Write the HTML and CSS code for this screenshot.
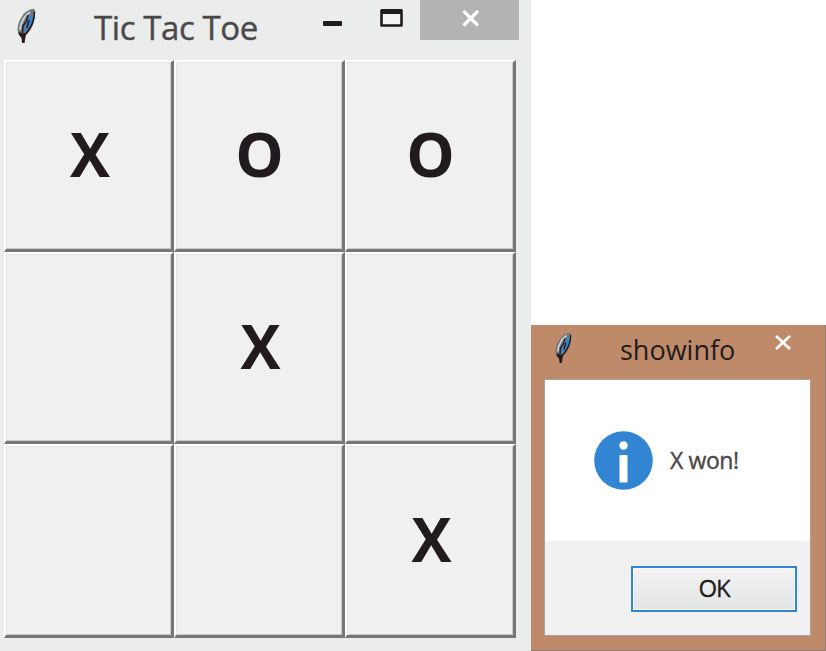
FILE: index.html
```html
<!DOCTYPE html>
<html lang="en">
<head>
<meta charset="utf-8">
<title>Tic Tac Toe</title>
<link rel="stylesheet" href="styles.css">
</head>
<body>
<svg class="defs" width="0" height="0" aria-hidden="true">
  <symbol id="feather" viewBox="0 0 20 36">
    <path d="M16.500 1.500C11 2 6.500 6 3.500 12C1 17 0.500 21 2 25.500L6 28L10 25.500C14 21 17.500 14 17.500 4Z" fill="#777779" stroke="#777779" stroke-width="1.400"/>
    <path d="M13 4C8 7 3.500 14 3 22" fill="none" stroke="#c8d0d3" stroke-width="2"/>
    <path d="M15 6L11 10C10 15 7 18 6.500 24C11 22 15 16 16.500 8Z" fill="#3185d2"/>
    <path d="M11 7L9.500 13L6 18L5.500 25M17.500 3.500C17.500 12 14 20 9 25.500M12 12L10 20" fill="none" stroke="#211b1f" stroke-width="1.500"/>
    <path d="M1.500 24L6 25.500L9.500 24.500L8.500 29L7.500 35H5L4.500 30L2 27Z" fill="#211b1f"/>
  </symbol>
</svg>
<main class="desktop">
  <section class="game">
    <header class="game-bar">
      <svg class="game-icon" width="20" height="36"><use href="#feather"/></svg>
      <h1 class="game-title">Tic Tac Toe</h1>
      <div class="controls">
        <svg class="minimize" width="19" height="5"><rect width="19" height="5" rx="1" fill="#211b1f"/></svg>
        <svg class="maximize" width="24" height="19"><path d="M1.500 1.500H21.500V16.500H1.500Z" fill="#f4f4f4" stroke="#211b1f" stroke-width="2.600" stroke-linejoin="round"/><path d="M1 0H22V5H1Z" fill="#211b1f"/></svg>
        <div class="close"><svg width="18" height="17"><path d="M1.500 1L16 15.500M16 1L1.500 15.500" stroke="#fff" stroke-width="3.200"/></svg></div>
      </div>
    </header>
    <div class="board">
      <button class="cell x">X</button><button class="cell">O</button><button class="cell">O</button>
      <button class="cell"></button><button class="cell x">X</button><button class="cell"></button>
      <button class="cell"></button><button class="cell"></button><button class="cell x">X</button>
    </div>
  </section>
  <section class="dialog">
    <header class="dialog-bar">
      <svg class="dialog-icon" width="18" height="32"><use href="#feather"/></svg>
      <h2 class="dialog-title">showinfo</h2>
      <svg class="dialog-close" width="16" height="15"><path d="M1 1L15 14M15 1L1 14" stroke="#fff" stroke-width="2.600"/></svg>
    </header>
    <div class="dialog-body">
      <div class="message">
        <svg width="59" height="59"><circle cx="29.500" cy="29.500" r="29.300" fill="#3185d2"/><circle cx="29.500" cy="14.500" r="4.200" fill="#fff"/><rect x="25.500" y="24" width="8" height="27.500" rx="1" fill="#fff"/></svg>
        <span class="message-text">X won!</span>
      </div>
      <div class="actions"><button class="ok">OK</button></div>
    </div>
  </section>
</main>
</body>
</html>
```
FILE: styles.css
```css
* { box-sizing: border-box; }
body {
  margin: 0;
  background: #fff;
  color: #211b1f;
  font-family: "Open Sans", "Noto Sans", sans-serif;
}
button { font-family: inherit; color: inherit; padding: 0; }
svg { display: block; flex: none; }
.defs { position: absolute; }
.desktop {
  display: flex;
  align-items: flex-end;
  width: 826px;
  height: 651px;
  overflow: hidden;
}
.game {
  width: 531px;
  height: 651px;
  padding-left: 4px;
  background: #ebecec;
}
.game-bar { display: flex; height: 60px; }
.game-icon { margin: 8px 0 0 13px; }
.game-title {
  width: 225px;
  margin: 5px 0 0 57px;
  font-size: 33px;
  line-height: 46px;
  font-weight: 400;
  letter-spacing: -0.4px;
  color: #4b484a;
  -webkit-text-stroke: 0.4px #4b484a;
  white-space: nowrap;
}
.controls { display: flex; }
.minimize { margin: 21px 38px 0 4px; }
.maximize { margin: 9px 16px 0 0; }
.close {
  display: flex;
  justify-content: center;
  width: 99px;
  height: 40px;
  padding: 10px 0 0 2px;
  background: #b3b3b3;
}
.board {
  display: grid;
  grid-template-columns: 170px 171px 171px;
  grid-template-rows: 192px 192px 194px;
}
.cell {
  border: solid;
  border-width: 2px 3px 3px 2px;
  border-color: #fff #7a7676 #7a7676 #fff;
  background: #f0f0f0;
  box-shadow: inset 1px 1px #e3e5e5, inset -1px -1px #c9cccc;
  padding: 0 0 4px 1px;
  font-size: 61px;
  line-height: 80px;
  font-weight: 700;
}
.x {
  padding-left: 3px;
  font-size: 60px;
}
.dialog {
  width: 295px;
  height: 326px;
  padding: 0 15px 0 13px;
  background: #bf8a69;
  border-right: 1px solid #927c71;
  border-bottom: 1px solid #927c71;
}
.dialog-bar { display: flex; height: 54px; }
.dialog-icon { margin: 7px 0 0 11px; }
.dialog-title {
  width: 155px;
  margin: 6px 0 0 47px;
  font-size: 27px;
  line-height: 38px;
  font-weight: 400;
  white-space: nowrap;
}
.dialog-close { margin-top: 10px; }
.dialog-body {
  width: 267px;
  height: 257px;
  border: 1px solid #aaa19c;
  background: #f0f0f0;
}
.message {
  display: flex;
  align-items: center;
  gap: 17px;
  height: 161px;
  padding-left: 49px;
  background: #fff;
}
.message-text {
  padding-bottom: 2px;
  font-size: 23px;
  letter-spacing: -0.4px;
  color: #4b484a;
  -webkit-text-stroke: 0.4px #4b484a;
}
.actions {
  display: flex;
  justify-content: flex-end;
  padding: 25px 13px 0 0;
}
.ok {
  width: 166px;
  height: 46px;
  padding-bottom: 4px;
  border: 2px solid #3185d2;
  background: linear-gradient(#f2f2f2, #e3e5e5);
  box-shadow: inset 0 0 0 1px #f8f8f8;
  font-size: 24px;
  letter-spacing: -1.3px;
  -webkit-text-stroke: 0.3px #211b1f;
}
```
